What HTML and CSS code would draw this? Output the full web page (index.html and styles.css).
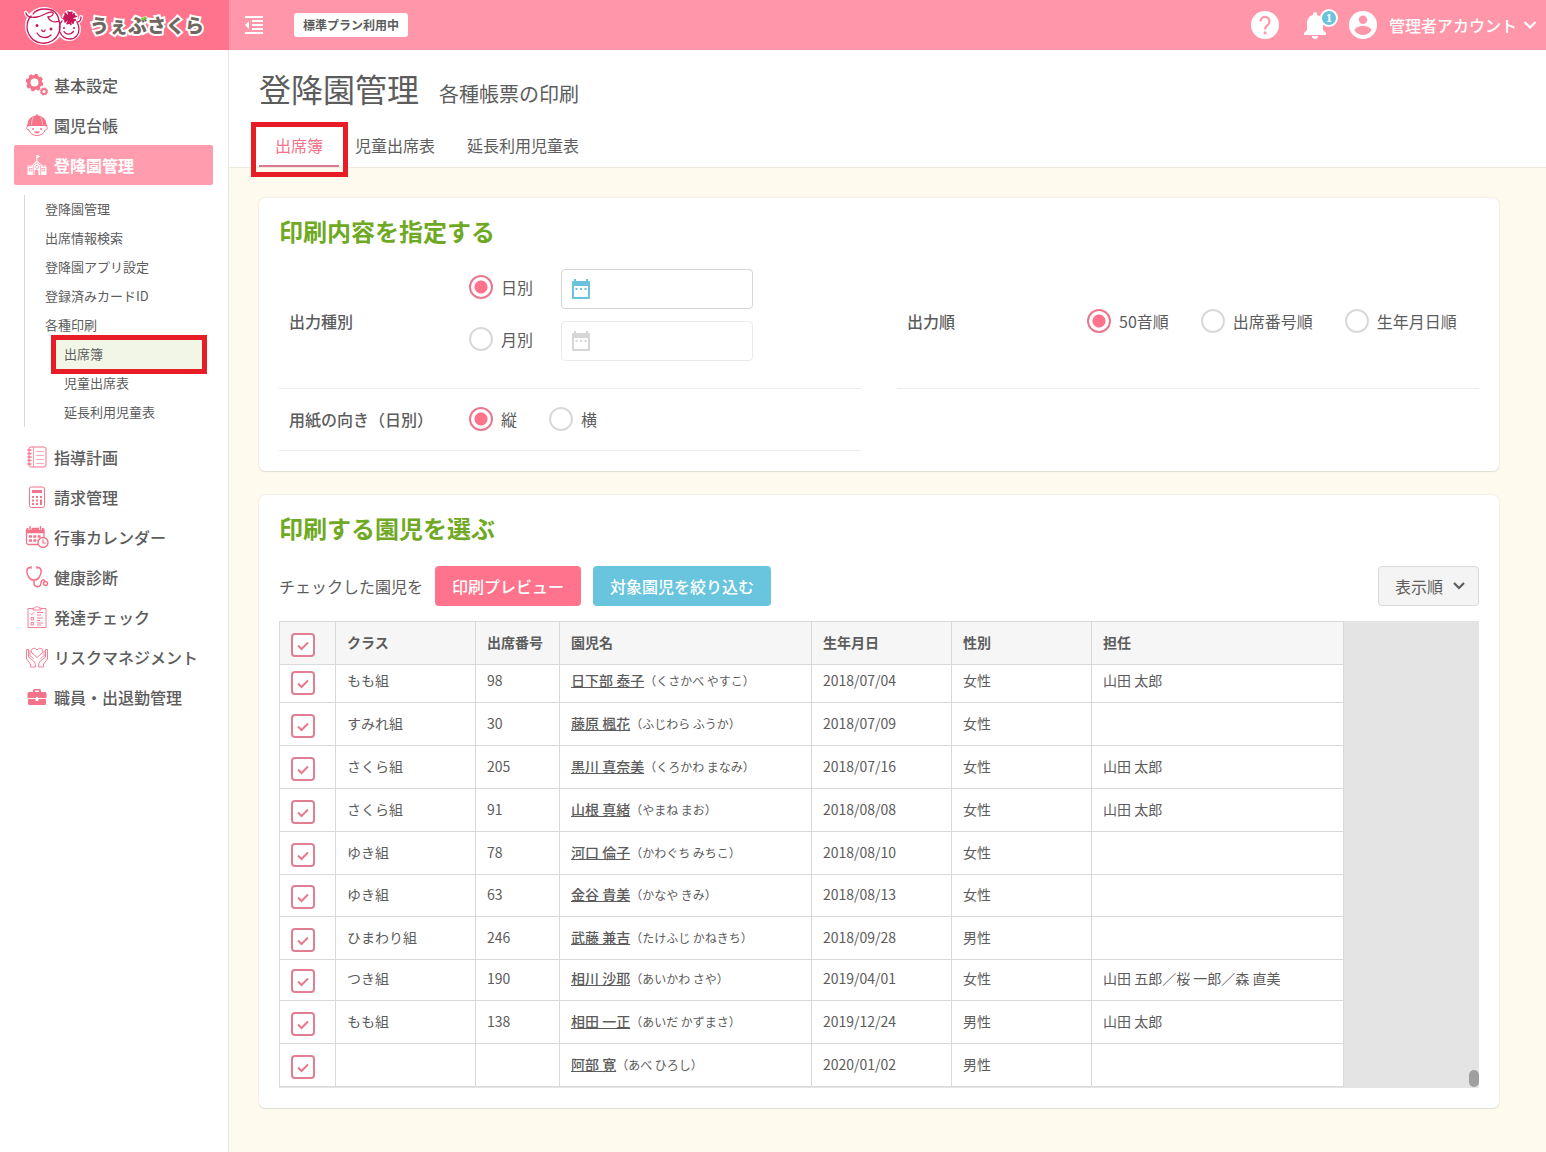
FILE: index.html
```html
<!DOCTYPE html>
<html lang="ja">
<head>
<meta charset="utf-8">
<title>登降園管理 - うぇぶさくら</title>
<meta name="viewport" content="width=device-width, initial-scale=1">
<link rel="stylesheet" href="styles.css">
</head>
<body>
<div class="app">
  <header class="topbar">
    <a class="brand" href="#" aria-label="うぇぶさくら">
      <svg class="brand-mark" width="60" height="44" viewBox="0 0 60 44" aria-hidden="true">
        <g fill="#fff" stroke="#fff" stroke-width="4" stroke-linecap="round">
          <circle cx="21" cy="23" r="17"/><circle cx="46" cy="26" r="10"/><circle cx="47" cy="15" r="6"/>
          <path d="M3 10c1 3 4 4 8 4"/><path d="M55 19c2-1 3-3 3-5"/>
        </g>
        <g fill="none" stroke="#c8185c" stroke-width="1.3" stroke-linecap="round">
          <path d="M3 10c1 4 6 5 11 4 6-1 9-5 15-5 3 1 0 5-4 5 1 4 6 6 11 4"/>
          <path d="M8 13A16.500 16.500 0 1 0 36 18C35 9 29 6 22 6c-5 0-10 2-12 5"/>
          <path d="M39 18c-3 3-3 8-2 11 2 5 6 7 10 7 6 0 9-5 9-10 0-3-1-5-2-7 3 0 4-2 4-5"/>
          <path d="M14 30c3 5 10 6 14 2M18.500 27c1 2 3.500 2 3.500 0M41 28.500c2 3.500 7 3.500 9.500 0"/>
        </g>
        <g fill="#c8185c">
          <circle cx="14" cy="22.500" r="1.500"/><circle cx="28" cy="26" r="1.500"/><circle cx="41" cy="25" r="1"/><circle cx="51" cy="25" r="1"/>
          <path d="M47 15l-2-6 2 1 2-1zM47 15l4-4.500.3 2.300 2 .7zM47 15l5.500 2-2 1-.5 2.300zM47 15l1 6.500-1.800-1.500-2.200.8zM47 15l-5 4-.2-2.300-1.800-1.200zM47 15l-6-1 1.300-1.700-.3-2.300z" stroke="#c8185c" stroke-width="1.500" stroke-linejoin="round"/>
        </g>
      </svg>
      <span class="brand-name">うぇ<span class="brand-accent">ぶ</span>さくら</span>
    </a>
    <div class="topbar-main">
      <button class="icon-button" type="button" aria-label="メニューを閉じる">
        <svg width="20" height="20" viewBox="0 0 20 20" fill="none" stroke="#fff" stroke-width="2"><path d="M1 2h18M8 6h11M8 10h11M8 14h11M1 18h18"/><path d="M5 6v8L1 10z" fill="#fff" stroke="none"/></svg>
      </button>
      <span class="plan">標準プラン利用中</span>
      <div class="topbar-tools">
        <button class="icon-button" type="button" aria-label="ヘルプ">
          <svg width="28" height="28" viewBox="0 0 28 28"><circle cx="14" cy="14" r="14" fill="#fff"/><path d="M9.500 10.500a4.500 4.500 0 1 1 7.500 3.300c-1.800 1.600-3 2.300-3 4.700" fill="none" stroke="#ff96a9" stroke-width="2.200"/><rect x="12.800" y="20.500" width="2.500" height="2.700" fill="#ff96a9"/></svg>
        </button>
        <button class="icon-button bell" type="button" aria-label="お知らせ">
          <svg width="24" height="28" viewBox="0 0 24 28" fill="#fff"><path d="M12 1a2 2 0 0 1 2 2v1c4 1 6 4 6 8v7l3 3v2H1v-2l3-3v-7c0-4 2-7 6-8V3a2 2 0 0 1 2-2zM9 25h6a3 3 0 0 1-6 0z"/></svg>
          <span class="count">1</span>
        </button>
        <button class="icon-button account" type="button">
          <svg width="28" height="28" viewBox="0 0 28 28"><circle cx="14" cy="14" r="14" fill="#fff"/><circle cx="14" cy="8.700" r="4.200" fill="#ff96a9"/><path d="M5.600 19.400c0-2.800 5.600-4.300 8.400-4.300s8.400 1.500 8.400 4.300a10 10 0 0 1-16.800 0z" fill="#ff96a9"/></svg>
          <span>管理者アカウント</span>
          <svg class="caret" width="14" height="10" viewBox="0 0 14 10" fill="none" stroke="#fff" stroke-width="2.200"><path d="M1.500 2l5.500 5.500L12.500 2"/></svg>
        </button>
      </div>
    </div>
  </header>

  <nav class="sidebar" aria-label="メインメニュー">
    <ul class="menu">
      <li><a class="menu-link" href="#">
        <svg class="menu-icon" viewBox="0 0 24 24" fill="none" stroke="#f4738b"><circle cx="9.500" cy="9.500" r="5.800" stroke-width="3.600"/><circle cx="9.500" cy="9.500" r="7.800" stroke-width="2" stroke-dasharray="3.400 2.726"/><circle cx="19" cy="18.500" r="2.500" stroke-width="1.800"/><circle cx="19" cy="18.500" r="3.600" stroke-width="1" stroke-dasharray="1.500 1.327"/></svg>
        基本設定</a></li>
      <li><a class="menu-link" href="#">
        <svg class="menu-icon" viewBox="0 0 24 24"><path d="M2.500 11.500c0-5 4-8.500 8.500-9V1.500h2v1c4.500.5 8.500 4 8.500 9L23 13H1z" fill="#f4738b"/><path d="M8.500 4C7 6.500 6.500 9 6.500 12M15.500 4c1.500 2.500 2 5 2 8" fill="none" stroke="#fbb" stroke-width="1"/><path d="M3.500 13c-2.500.5-2.500 4 .5 4 1 3.500 4 5.500 8 5.500s7-2 8-5.500c3 0 3-3.500.5-4" fill="none" stroke="#f4738b"/><circle cx="8" cy="16" r="1" fill="#f4738b"/><circle cx="16" cy="16" r="1" fill="#f4738b"/><path d="M9 18.500h6c-.5 2.500-5.500 2.500-6 0z" fill="#f4738b"/></svg>
        園児台帳</a></li>
      <li><a class="menu-link is-active" href="#" aria-current="true">
        <svg class="menu-icon" viewBox="0 0 24 24" fill="#fff"><path d="M11.300 2h1l3 1.500-3 1.500v3l5 4.200h4.200v9.800h-8v-3.500a2 2 0 0 0-4 0V22H2.500v-9.800h4.300l4.500-4.200z"/><path d="M8 12.500l4-3 4 3M4.500 15.500H7V18H4.500zM17 15.500h2.500V18H17zM2 13h5M17 13h6M8.300 13v9M15.700 13v9" fill="none" stroke="#ff96a9" stroke-width=".8"/><circle cx="12" cy="14" r="1.500" fill="none" stroke="#ff96a9" stroke-width=".8"/></svg>
        登降園管理</a>
        <ul class="submenu">
          <li><a href="#">登降園管理</a></li>
          <li><a href="#">出席情報検索</a></li>
          <li><a href="#">登降園アプリ設定</a></li>
          <li><a href="#">登録済みカードID</a></li>
          <li><a href="#">各種印刷</a>
            <ul class="submenu-nested">
              <li><a class="is-current" href="#" aria-current="page">出席簿</a></li>
              <li><a href="#">児童出席表</a></li>
              <li><a href="#">延長利用児童表</a></li>
            </ul>
          </li>
        </ul>
      </li>
      <li><a class="menu-link" href="#">
        <svg class="menu-icon" viewBox="0 0 24 24" fill="none" stroke="#f4738b"><rect x="4" y="2" width="17" height="20" rx="2"/><path d="M8.500 2v20" stroke-width=".7"/><path d="M11 6.500h8M11 10.500h8M11 14.500h8M11 18.500h8" stroke="#f9b0bd"/><path d="M2.500 5h4M2.500 8.500h4M2.500 12h4M2.500 15.500h4M2.500 19h4" stroke-width="1.400"/></svg>
        指導計画</a></li>
      <li><a class="menu-link" href="#">
        <svg class="menu-icon" viewBox="0 0 24 24" fill="none" stroke="#f4738b"><rect x="4.500" y="2" width="15" height="20.500" rx="2"/><path d="M7 6.500h10" stroke-width="3"/><path d="M7 12h10M7 15.500h7.500M7 19h7.500" stroke-width="2" stroke-dasharray="2 2"/><path d="M16 14.500v5.500" stroke-width="2"/></svg>
        請求管理</a></li>
      <li><a class="menu-link" href="#">
        <svg class="menu-icon" viewBox="0 0 24 24" fill="none" stroke="#f4738b"><path d="M13 19.500H3.500a2 2 0 0 1-2-2v-12a2 2 0 0 1 2-2h13.500a2 2 0 0 1 2 2V12" stroke-width="1.300"/><path d="M1.500 6h17.500" stroke-width="4.500"/><path d="M5 1v4M15.500 1v4" stroke="#fff" stroke-width="3"/><path d="M5 1v4M15.500 1v4" stroke-width="1.400"/><path d="M4 11.500h12M4 15.500h9" stroke-width="2.500" stroke-dasharray="3 1.300"/><circle cx="18" cy="17.500" r="5" fill="#fff" stroke-width="1.400"/><path d="M18 14.500v3.500h3" stroke-width="1.200"/></svg>
        行事カレンダー</a></li>
      <li><a class="menu-link" href="#">
        <svg class="menu-icon" viewBox="0 0 24 24" fill="none" stroke="#f4738b" stroke-width="1.500"><path d="M6 2.500H4.500C1 3.500 1 8 4 12.500c1.300 2 2.700 2.500 5 2.500s3.700-.5 5-2.500c3-4.500 3-9-.5-10H12M6 1.200v2.600M12 1.200v2.600M9 15v2.500c0 5.500 6.500 5.500 7 .5.300-4 3.500-4 4-1"/><circle cx="20.500" cy="18.500" r="2"/></svg>
        健康診断</a></li>
      <li><a class="menu-link" href="#">
        <svg class="menu-icon" viewBox="0 0 24 24" fill="none" stroke="#f4738b" stroke-width=".9"><path d="M8 3.500H3v19h18v-19h-5M8 5h8V3h-2.500c-.5-2-2.500-2-3 0H8z"/><path d="M5.500 8.500l1.200 1.200L9 7.500M12 7.500h6M12 10h4M12 13h6M12 15.500h3M12 18h6M12 20h4M6 12.500h2.500V15H6zM6 17.500h2.500V20H6z"/></svg>
        発達チェック</a></li>
      <li><a class="menu-link" href="#">
        <svg class="menu-icon" viewBox="0 0 24 24" fill="none" stroke="#f4738b" stroke-width=".9"><path d="M12 12.500L7 8C4.500 4 9.500 1.500 12 5c2.500-3.500 7.500-1 5 3z"/><path d="M1.500 4.500h2V12l5 4c1.500 1.500 2 3 2 6H5.500v-3l-4-5zM3.500 11c2-1 4 1.500 5 3M22.500 4.500h-2V12l-5 4c-1.500 1.500-2 3-2 6h5v-3l4-5zM20.500 11c-2-1-4 1.500-5 3M5 5.500V10M19 5.500V10"/></svg>
        リスクマネジメント</a></li>
      <li><a class="menu-link" href="#">
        <svg class="menu-icon" viewBox="0 0 24 24" fill="#f4738b"><path d="M8 7V5.500A1.500 1.500 0 0 1 9.500 4h5A1.500 1.500 0 0 1 16 5.500V7h4a1.500 1.500 0 0 1 1.500 1.500V13h-19V8.500A1.500 1.500 0 0 1 4 7zm2 0h4V5.500h-4zM3 14h7.500v2h3v-2H21v4.500a1.500 1.500 0 0 1-1.500 1.500h-15A1.500 1.500 0 0 1 3 18.500z" fill-rule="evenodd"/><rect x="11" y="12" width="2" height="3" fill="#fff"/></svg>
        職員・出退勤管理</a></li>
    </ul>
  </nav>

  <main class="main">
    <div class="page-head">
      <div class="page-title"><h1>登降園管理</h1><p>各種帳票の印刷</p></div>
      <nav class="tabs" aria-label="帳票">
        <a class="tab is-selected" href="#" aria-current="page">出席簿</a>
        <a class="tab" href="#">児童出席表</a>
        <a class="tab" href="#">延長利用児童表</a>
      </nav>
    </div>
    <div class="content">
      <form class="card">
        <h2>印刷内容を指定する</h2>
        <div class="fields">
          <div class="field" role="group" aria-labelledby="kind">
            <span class="field-label" id="kind">出力種別</span>
            <div class="field-lines">
              <div class="line">
                <label class="choice"><input class="radio" type="radio" name="kind" checked>日別</label>
                <span class="date"><svg width="20" height="22" viewBox="0 0 20 22" fill="#6ac2dc"><path d="M3 1h2v2h10V1h2v2h1a1 1 0 0 1 1 1v16a1 1 0 0 1-1 1H2a1 1 0 0 1-1-1V4a1 1 0 0 1 1-1h1zm0 7v11h14V8z" fill-rule="evenodd"/><path d="M4.500 10h2v2h-2zM9 10h2v2H9zM13.500 10h2v2h-2z"/></svg><input type="text" aria-label="日付"></span>
              </div>
              <div class="line">
                <label class="choice"><input class="radio" type="radio" name="kind">月別</label>
                <span class="date is-disabled"><svg width="20" height="22" viewBox="0 0 20 22" fill="#d6d6d6"><path d="M3 1h2v2h10V1h2v2h1a1 1 0 0 1 1 1v16a1 1 0 0 1-1 1H2a1 1 0 0 1-1-1V4a1 1 0 0 1 1-1h1zm0 7v11h14V8z" fill-rule="evenodd"/><path d="M4.500 10h2v2h-2zM9 10h2v2H9zM13.500 10h2v2h-2z"/></svg><input type="text" aria-label="年月" disabled></span>
              </div>
            </div>
          </div>
          <div class="field" role="group" aria-labelledby="order">
            <span class="field-label" id="order">出力順</span>
            <div class="choices">
              <label class="choice"><input class="radio" type="radio" name="order" checked>50音順</label>
              <label class="choice"><input class="radio" type="radio" name="order">出席番号順</label>
              <label class="choice"><input class="radio" type="radio" name="order">生年月日順</label>
            </div>
          </div>
          <div class="field" role="group" aria-labelledby="paper">
            <span class="field-label" id="paper">用紙の向き（日別）</span>
            <div class="choices">
              <label class="choice"><input class="radio" type="radio" name="paper" checked>縦</label>
              <label class="choice"><input class="radio" type="radio" name="paper">横</label>
            </div>
          </div>
        </div>
      </form>

      <section class="card">
        <h2>印刷する園児を選ぶ</h2>
        <div class="toolbar">
          <span>チェックした園児を</span>
          <button class="button button-pink" type="button">印刷プレビュー</button>
          <button class="button button-blue" type="button">対象園児を絞り込む</button>
          <span class="sort">
            <select aria-label="表示順"><option>表示順</option></select>
            <svg width="14" height="10" viewBox="0 0 14 10" fill="none" stroke="#5c5c5c" stroke-width="2.200"><path d="M2 2l5 5 5-5"/></svg>
          </span>
        </div>
        <div class="grid">
          <table>
            <colgroup><col class="c-check"><col class="c-mid"><col class="c-no"><col class="c-wide"><col class="c-mid"><col class="c-mid"><col class="c-wide"></colgroup>
            <thead><tr><th><input class="check" type="checkbox" aria-label="すべて選択" checked></th><th>クラス</th><th>出席番号</th><th>園児名</th><th>生年月日</th><th>性別</th><th>担任</th></tr></thead>
            <tbody>
              <tr class="is-clipped"><td><input class="check" type="checkbox" aria-label="日下部 泰子" checked></td><td>もも組</td><td>98</td><td><a href="#">日下部 泰子</a><small>（くさかべ やすこ）</small></td><td>2018/07/04</td><td>女性</td><td>山田 太郎</td></tr>
              <tr><td><input class="check" type="checkbox" aria-label="藤原 楓花" checked></td><td>すみれ組</td><td>30</td><td><a href="#">藤原 楓花</a><small>（ふじわら ふうか）</small></td><td>2018/07/09</td><td>女性</td><td></td></tr>
              <tr><td><input class="check" type="checkbox" aria-label="黒川 真奈美" checked></td><td>さくら組</td><td>205</td><td><a href="#">黒川 真奈美</a><small>（くろかわ まなみ）</small></td><td>2018/07/16</td><td>女性</td><td>山田 太郎</td></tr>
              <tr><td><input class="check" type="checkbox" aria-label="山根 真緒" checked></td><td>さくら組</td><td>91</td><td><a href="#">山根 真緒</a><small>（やまね まお）</small></td><td>2018/08/08</td><td>女性</td><td>山田 太郎</td></tr>
              <tr><td><input class="check" type="checkbox" aria-label="河口 倫子" checked></td><td>ゆき組</td><td>78</td><td><a href="#">河口 倫子</a><small>（かわぐち みちこ）</small></td><td>2018/08/10</td><td>女性</td><td></td></tr>
              <tr class="is-compact"><td><input class="check" type="checkbox" aria-label="金谷 貴美" checked></td><td>ゆき組</td><td>63</td><td><a href="#">金谷 貴美</a><small>（かなや きみ）</small></td><td>2018/08/13</td><td>女性</td><td></td></tr>
              <tr><td><input class="check" type="checkbox" aria-label="武藤 兼吉" checked></td><td>ひまわり組</td><td>246</td><td><a href="#">武藤 兼吉</a><small>（たけふじ かねきち）</small></td><td>2018/09/28</td><td>男性</td><td></td></tr>
              <tr class="is-tight"><td><input class="check" type="checkbox" aria-label="相川 沙耶" checked></td><td>つき組</td><td>190</td><td><a href="#">相川 沙耶</a><small>（あいかわ さや）</small></td><td>2019/04/01</td><td>女性</td><td>山田 五郎／桜 一郎／森 直美</td></tr>
              <tr><td><input class="check" type="checkbox" aria-label="相田 一正" checked></td><td>もも組</td><td>138</td><td><a href="#">相田 一正</a><small>（あいだ かずまさ）</small></td><td>2019/12/24</td><td>男性</td><td>山田 太郎</td></tr>
              <tr><td><input class="check" type="checkbox" aria-label="阿部 寛" checked></td><td></td><td></td><td><a href="#">阿部 寛</a><small>（あべ ひろし）</small></td><td>2020/01/02</td><td>男性</td><td></td></tr>
            </tbody>
          </table>
          <span class="thumb"></span>
        </div>
      </section>
    </div>
  </main>
</div>
</body>
</html>
```
FILE: styles.css
```css
* { box-sizing: border-box; }

body {
  margin: 0;
  color: #5c5c5c;
  font: 16px/24px "Noto Sans CJK JP", "Noto Sans", sans-serif;
  background: #fffaee;
}

a { color: inherit; text-decoration: none; }
ul { margin: 0; padding: 0; list-style: none; }
h1, h2, p { margin: 0; }
button, input, select { font: inherit; color: inherit; }
svg { display: block; flex: none; }

.app {
  display: grid;
  grid-template-columns: 229px minmax(0, 1fr);
  grid-template-rows: 50px 1fr;
  min-height: 100vh;
}

/* top bar */
.topbar {
  grid-column: 1 / -1;
  display: grid;
  grid-template-columns: subgrid;
  color: #fff;
}
.brand {
  display: flex;
  align-items: center;
  gap: 7px;
  padding-left: 23px;
  background: #ff738c;
}
.brand-name {
  color: #6f6660;
  font-size: 19px;
  font-weight: 900;
  -webkit-text-stroke: 4px #fff;
  paint-order: stroke fill;
}
/* the voicing mark of ぶ is green */
.brand-accent { position: relative; }
.brand-accent::after {
  content: "ぶ";
  position: absolute;
  top: 0;
  left: 0;
  color: #7dbb28;
  line-height: inherit;
  -webkit-text-stroke: 0;
  clip-path: polygon(68% 0, 100% 0, 100% 50%, 68% 42%);
}
.topbar-main {
  display: flex;
  align-items: center;
  padding: 0 9px 0 15px;
  background: #ff96a9;
}
.icon-button {
  display: flex;
  align-items: center;
  padding: 0;
  border: 0;
  background: none;
  cursor: pointer;
}
.plan {
  margin-left: 30px;
  padding: 0 9px;
  border-radius: 3px;
  background: #fff;
  color: #5c5c5c;
  font-size: 12px;
  font-weight: 700;
}
.topbar-tools {
  display: flex;
  align-items: center;
  gap: 24px;
  margin-left: auto;
}
.bell { position: relative; margin-right: -2px; }
.count {
  position: absolute;
  top: -2px;
  right: -11px;
  width: 18px;
  height: 18px;
  border: 2px solid #fff;
  border-radius: 50%;
  background: #6ac2dc;
  font: 700 13px/14px "Liberation Serif", serif;
  text-align: center;
}
.account { gap: 12px; font-weight: 500; }
.caret { margin-left: -6px; }

/* side menu */
.sidebar {
  padding: 15px 15px 20px 14px;
  border-right: 1px solid #e9e9e4;
  background: #fff;
}
.menu-link {
  display: flex;
  align-items: center;
  gap: 5px;
  height: 40px;
  padding-left: 11px;
  border-radius: 2px;
  font-weight: 500;
}
.menu-link.is-active { background: #ff9cae; color: #fff; font-weight: 700; }
.menu-icon { width: 24px; height: 24px; }
.submenu {
  margin: 10px 11px 10px 10px;
  border-left: 1px solid #d8d8d8;
  font-size: 13px;
  line-height: 27px;
}
.submenu a { display: block; padding: 0 0 2px 20px; }
.submenu-nested { padding-left: 31px; }
.submenu-nested a { padding-left: 8px; }
.submenu-nested .is-current { outline: 5px solid #e81c24; background: #f1f6e6; }

/* page heading */
.page-head {
  padding: 14px 30px 0;
  border-bottom: 1px solid #eeeae0;
  background: #fff;
}
.page-title {
  display: flex;
  align-items: baseline;
  gap: 20px;
  margin-bottom: 13px;
}
.page-title h1 { font-size: 32px; font-weight: 400; line-height: 48px; }
.page-title p { font-size: 20px; }
.tabs { display: flex; }
.tab {
  position: relative;
  height: 42px;
  padding: 0 16px;
  line-height: 40px;
}
.tab.is-selected { border-bottom: 2px solid #d9788f; color: #f4738b; }
.tab.is-selected::after {
  content: "";
  position: absolute;
  inset: -3px -9px -12px -8px;
  border: 5px solid #e81c24;
}

/* cards */
.content {
  display: grid;
  gap: 24px;
  padding: 30px 47px 44px 30px;
}
.card {
  min-width: 0;
  padding: 20px;
  border-radius: 6px;
  background: #fff;
  box-shadow: 0 0 2px rgba(0, 0, 0, .14), 0 1px 1px rgba(0, 0, 0, .08);
}
.card h2 { color: #6fa923; font-size: 24px; font-weight: 700; line-height: 26px; }

.fields {
  display: grid;
  grid-template-columns: 1fr 1fr;
  column-gap: 36px;
  margin-top: 11px;
}
.field {
  display: flex;
  align-items: center;
  min-height: 62px;
  padding: 0 10px;
  border-bottom: 1px solid #ececec;
}
.field-label { flex: none; width: 180px; padding-bottom: 2px; font-weight: 500; }
.field-lines { padding: 14px 0 15px; }
.line { display: flex; gap: 28px; margin-bottom: 12px; }
.choices { display: flex; flex-wrap: wrap; gap: 8px 32px; padding-bottom: 2px; }
.choice { display: flex; align-items: center; gap: 8px; height: 36px; }
.radio, .check {
  appearance: none;
  flex: none;
  width: 24px;
  height: 24px;
  margin: 0;
  border: 2px solid #d9d9d9;
  border-radius: 50%;
  background: #fff;
}
.radio:checked {
  border-color: #e9788f;
  background: radial-gradient(circle, #ff738c 6px, #fff 7px);
}
.date {
  display: flex;
  align-items: center;
  width: 192px;
  height: 40px;
  padding-left: 9px;
  border: 1px solid #d6d6d6;
  border-radius: 4px;
}
.date input {
  flex: 1;
  min-width: 0;
  padding: 0 8px;
  border: 0;
  outline: 0;
  background: none;
}
.date.is-disabled { border-color: #ebebeb; }

.toolbar {
  display: flex;
  align-items: center;
  gap: 12px;
  margin: 25px 0 15px;
}
.button {
  height: 40px;
  padding: 0 17px;
  border: 0;
  border-radius: 4px;
  color: #fff;
  font-weight: 500;
}
.button-pink { background: #ff738c; }
.button-blue { background: #69c4de; }
.sort { display: grid; align-items: center; margin-left: auto; }
.sort select, .sort svg { grid-area: 1 / 1; }
.sort svg { justify-self: end; margin-right: 13px; pointer-events: none; }
.sort select {
  appearance: none;
  height: 40px;
  padding: 0 34px 0 16px;
  border: 1px solid #d9d9d9;
  border-radius: 4px;
  background: #f4f4f4;
}

/* children table */
.grid {
  position: relative;
  overflow: hidden;
  padding-bottom: 1px;
  background: #e4e4e4;
}
table {
  width: 1065px;
  border-spacing: 0;
  border-top: 1px solid #d9d9d9;
  border-left: 1px solid #d9d9d9;
  table-layout: fixed;
  font-size: 14px;
  line-height: 20px;
}
.c-check { width: 56px; }
.c-no { width: 84px; }
.c-mid { width: 140px; }
.c-wide { width: 252px; }
th, td {
  height: 43px;
  padding: 0 0 12px 11px;
  border-right: 1px solid #d9d9d9;
  border-bottom: 1px solid #d9d9d9;
  background: #fff;
  text-align: left;
  vertical-align: bottom;
}
th { background: #f6f6f6; font-weight: 700; }
th:first-child, td:first-child { padding-bottom: 7px; }
.is-clipped td { height: 38px; }
.is-compact td { height: 42px; }
.is-tight td { height: 41px; }
td a { font-weight: 500; text-decoration: underline; }
small { font-size: 12px; line-height: 1; }
.check {
  display: block;
  border-color: #e07f93;
  border-radius: 4px;
}
.check:checked {
  background: #fff url("data:image/svg+xml,%3Csvg xmlns='http://www.w3.org/2000/svg' viewBox='0 0 20 20' fill='none' stroke='%23e9788f' stroke-width='2'%3E%3Cpath d='M5 10.500l3.500 3.500L15 7.500'/%3E%3C/svg%3E") center / 20px;
}
.thumb {
  position: absolute;
  right: 0;
  bottom: 1px;
  width: 10px;
  height: 17px;
  border-radius: 5px;
  background: #9f9f9f;
}
```
